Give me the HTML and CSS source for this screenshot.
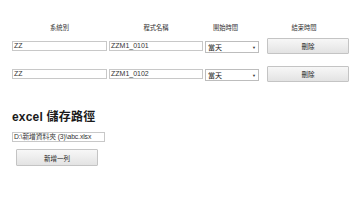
FILE: index.html
```html
<!DOCTYPE html>
<html lang="zh-Hant">
<head>
<meta charset="utf-8">
<link rel="stylesheet" href="styles.css">
</head>
<body>
<div class="page">
  <div class="grid head">
    <div class="hd hd1">系統別</div>
    <div class="hd hd2">程式名稱</div>
    <div class="hd hd3">開始時間</div>
    <div class="hd hd4">結束時間</div>
  </div>
  <div class="grid rows">
    <div class="cell"><div class="field w1">ZZ</div></div>
    <div class="cell"><div class="field w2">ZZM1_0101</div></div>
    <div class="cell"><div class="sel"><span>當天</span><span class="arr">▼</span></div></div>
    <div class="cell"><button class="btn del">刪除</button></div>

    <div class="cell"><div class="field w1">ZZ</div></div>
    <div class="cell"><div class="field w2">ZZM1_0102</div></div>
    <div class="cell"><div class="sel"><span>當天</span><span class="arr">▼</span></div></div>
    <div class="cell"><button class="btn del">刪除</button></div>
  </div>

  <h2 class="title">excel 儲存路徑</h2>
  <div class="field path">D:\新增資料夾 (3)\abc.xlsx</div>
  <div><button class="btn add">新增一列</button></div>
</div>
</body>
</html>
```

FILE: styles.css
```css
html, body {
  margin: 0;
  padding: 0;
  background: #fff;
}
body {
  font-family: "Liberation Sans", "Noto Sans CJK TC", sans-serif;
  color: #222;
}
.page {
  padding: 24px 0 0 12px;
}
.grid {
  display: grid;
  grid-template-columns: 95px 94px 55px 90px;
  column-gap: 2px;
}
.head {
  height: 14px;
}
.rows {
  grid-template-rows: 16px 16px;
  row-gap: 12px;
  align-items: center;
}
.hd {
  font-size: 6.3px;
  line-height: 8px;
  text-align: center;
  color: #333;
}
.hd3 { padding-right: 14px; }
.hd4 { padding-right: 6px; }
.cell {
  display: flex;
  align-items: center;
  height: 16px;
}
.field {
  box-sizing: border-box;
  height: 10px;
  padding: 0 1px;
  border: 1px solid #c8c8c8;
  font-size: 7px;
  line-height: 8px;
  color: #333;
  background: #fff;
  white-space: nowrap;
  overflow: hidden;
}
.w1 { width: 95px; }
.w2 { width: 94px; }
.sel {
  box-sizing: border-box;
  width: 54px;
  height: 12px;
  margin-top: 2px;
  border: 1px solid #bdbdbd;
  display: flex;
  align-items: center;
  justify-content: space-between;
  padding: 0 2px;
  font-size: 7px;
  color: #222;
  background: #fff;
}
.arr {
  font-size: 4px;
  color: #333;
}
.btn {
  box-sizing: border-box;
  margin: 0;
  padding: 0;
  border: 1px solid #c4c4c4;
  border-radius: 1px;
  background: linear-gradient(#f7f7f7, #e3e3e3);
  font-family: "Liberation Sans", "Noto Sans CJK TC", sans-serif;
  font-size: 6.5px;
  color: #222;
}
.del {
  width: 82px;
  height: 16px;
  margin-left: 5px;
}
.title {
  margin: 27px 0 0 0;
  font-size: 12px;
  line-height: 16px;
  font-weight: bold;
  color: #1a1a1a;
  letter-spacing: 0.2px;
}
.path {
  width: 93px;
  margin-top: 7px;
  font-size: 6.8px;
  letter-spacing: -0.1px;
}
.add {
  width: 82px;
  height: 17px;
  margin: 7px 0 0 4px;
  font-size: 6.5px;
}
```
